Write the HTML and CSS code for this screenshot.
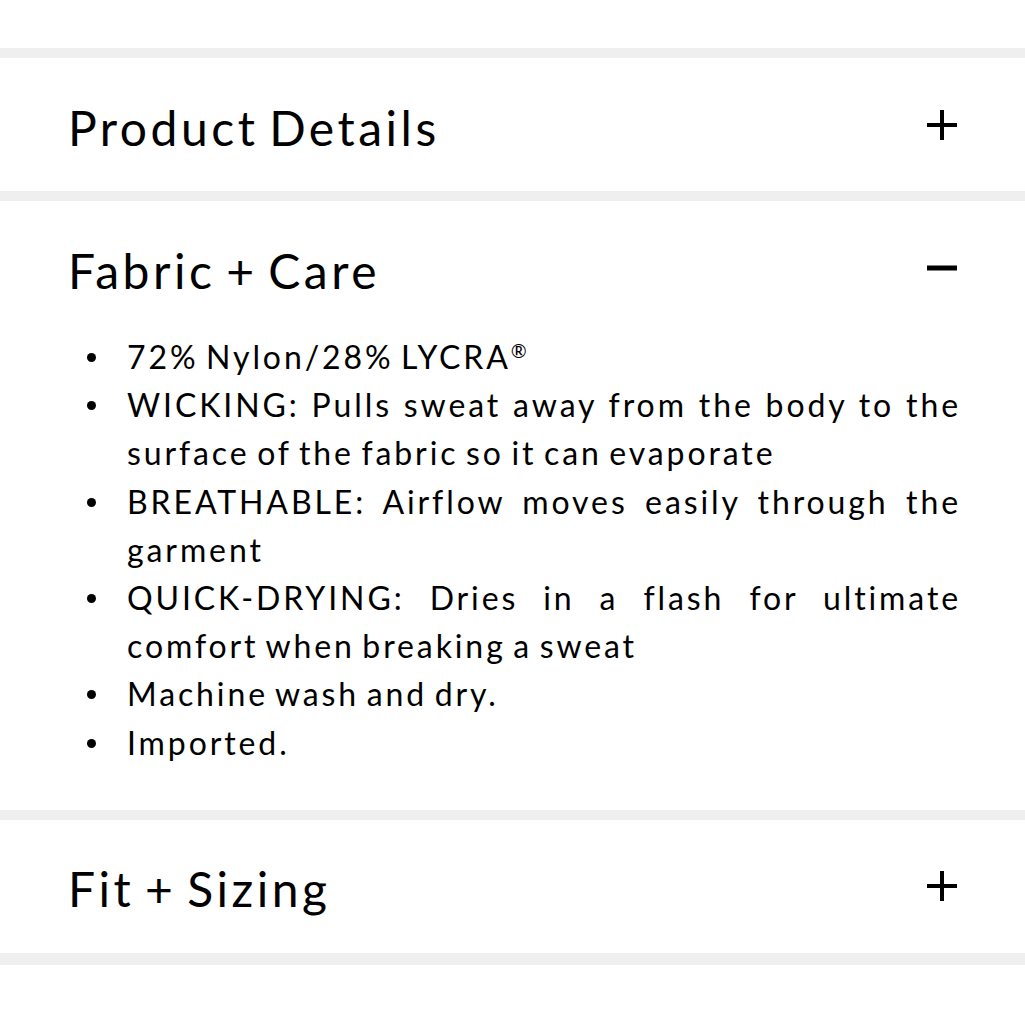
FILE: index.html
```html
<!DOCTYPE html>
<html lang="en">
<head>
<meta charset="utf-8">
<title>Product accordion</title>
<link rel="stylesheet" href="styles.css">
</head>
<body>
<div class="accordion">
  <div class="sep"></div>
  <section class="item">
    <div class="head">
      <h2 class="title">Product Details</h2>
      <svg class="icon" viewBox="0 0 30 30" width="30" height="30"><path d="M15 0V30M0 15H30" stroke="#000" stroke-width="4" fill="none"/></svg>
    </div>
  </section>
  <div class="sep"></div>
  <section class="item">
    <div class="head">
      <h2 class="title">Fabric + Care</h2>
      <svg class="icon" viewBox="0 0 30 30" width="30" height="30"><path d="M0 15H30" stroke="#000" stroke-width="5" fill="none"/></svg>
    </div>
    <ul class="list">
      <li>72% Nylon/28% LYCRA<span class="reg">®</span></li>
      <li>WICKING: Pulls sweat away from the body to the surface of the fabric so it can evaporate</li>
      <li>BREATHABLE: Airflow moves easily through the garment</li>
      <li>QUICK-DRYING: Dries in a flash for ultimate comfort when breaking a sweat</li>
      <li>Machine wash and dry.</li>
      <li>Imported.</li>
    </ul>
  </section>
  <div class="sep"></div>
  <section class="item">
    <div class="head">
      <h2 class="title">Fit + Sizing</h2>
      <svg class="icon" viewBox="0 0 30 30" width="30" height="30"><path d="M15 0V30M0 15H30" stroke="#000" stroke-width="4" fill="none"/></svg>
    </div>
  </section>
  <div class="sep sep-last"></div>
</div>
</body>
</html>
```
FILE: styles.css
```css
html, body {
  margin: 0;
  padding: 0;
  background: #fff;
}
body {
  font-family: Lato, "Noto Sans", sans-serif;
  color: #000;
}
.accordion {
  padding-top: 48px;
}
.sep {
  height: 10px;
  background: #efefef;
}
.sep-last {
  height: 12px;
}
.head {
  height: 133px;
  display: flex;
  align-items: center;
  justify-content: space-between;
  padding: 0 68px 0 68px;
}
.title {
  margin: 0;
  font-size: 48px;
  font-weight: 400;
  letter-spacing: 3.5px;
  word-spacing: -5px;
  line-height: 1;
  padding-top: 6px;
}
.icon {
  display: block;
  flex: none;
}
.list {
  margin: -1px 0 0 0;
  padding: 0 64px 43px 127px;
  font-size: 32px;
  line-height: 48.2px;
  letter-spacing: 2.9px;
  word-spacing: -3.5px;
  text-align: justify;
  list-style: none;
}
.list li {
  position: relative;
}
.list li::before {
  content: "";
  position: absolute;
  left: -40px;
  top: 20px;
  width: 9px;
  height: 9px;
  border-radius: 50%;
  background: #000;
}
.reg {
  font-size: 0.6em;
  letter-spacing: 0;
  vertical-align: 0.55em;
  line-height: 0;
}
```
